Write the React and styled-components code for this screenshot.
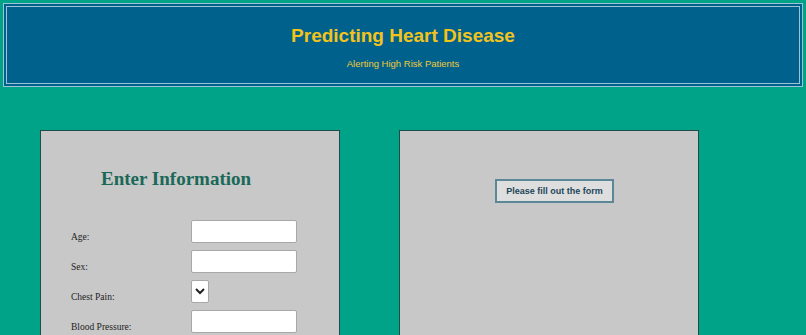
import styled, { createGlobalStyle } from "styled-components";

const GlobalStyle = createGlobalStyle`
  html, body {
    margin: 0;
    padding: 0;
    background: #00a387;
    overflow: hidden;
  }

  body {
    padding: 3px;
    font-family: "Liberation Sans", Arial, sans-serif;
  }
`;

const Header = styled.header`
  height: 76px;
  border: 4px double #9cc3d6;
  background: #00628c;
  display: flex;
  flex-direction: column;
  align-items: center;
  box-sizing: content-box;
`;

const HeaderTitle = styled.h1`
  margin: 18px 0 0;
  font-size: 19px;
  line-height: 22px;
  font-weight: 700;
  color: #f3c31c;
`;

const HeaderSubtitle = styled.p`
  margin: 11px 0 0;
  font-size: 9.5px;
  line-height: 12px;
  color: #f0c93a;
`;

const Main = styled.main`
  display: flex;
  gap: 59px;
  padding: 43px 0 0 37px;
`;

const Panel = styled.section`
  width: 298px;
  height: 260px;
  background: #c8c8c8;
  border: 1px solid #1e4d48;
  flex-shrink: 0;
`;

const FormTitle = styled.h2`
  margin: 37px 0 0 60px;
  font-family: "Liberation Serif", "Times New Roman", serif;
  font-size: 19px;
  line-height: 22px;
  font-weight: 700;
  color: #1b6858;
`;

const FormGrid = styled.form`
  display: grid;
  grid-template-columns: 120px auto;
  row-gap: 7px;
  margin: 30px 0 0 30px;
`;

const Label = styled.label`
  font-family: "Liberation Serif", "Times New Roman", serif;
  font-size: 9.5px;
  color: #222;
  align-self: end;
  padding-bottom: 1px;
`;

const TextInput = styled.input`
  width: 106px;
  height: 23px;
  box-sizing: border-box;
  border: 1px solid #a8a8a8;
  border-radius: 2px;
  background: #fff;
  margin: 0;
  padding: 0 4px;
`;

const Select = styled.select`
  width: 18px;
  height: 23px;
  box-sizing: border-box;
  border: 1px solid #a8a8a8;
  border-radius: 2px;
  background: #fff;
  color: #222;
  margin: 0;
  padding: 0;
  font-size: 9px;
`;

const StatusBox = styled.div`
  margin: 48px 0 0 95px;
  width: 119px;
  height: 24px;
  box-sizing: border-box;
  border: 2px solid #5b8797;
  background: #dedede;
  display: flex;
  align-items: center;
  justify-content: center;
  font-size: 9px;
  font-weight: 700;
  color: #1d4658;
`;

export default function App() {
  return (
    <>
      <GlobalStyle />
      <Header>
        <HeaderTitle>Predicting Heart Disease</HeaderTitle>
        <HeaderSubtitle>Alerting High Risk Patients</HeaderSubtitle>
      </Header>
      <Main>
        <Panel>
          <FormTitle>Enter Information</FormTitle>
          <FormGrid>
            <Label>Age:</Label>
            <TextInput />
            <Label>Sex:</Label>
            <TextInput />
            <Label>Chest Pain:</Label>
            <div>
              <Select>
                <option></option>
              </Select>
            </div>
            <Label>Blood Pressure:</Label>
            <TextInput />
          </FormGrid>
        </Panel>
        <Panel>
          <StatusBox>Please fill out the form</StatusBox>
        </Panel>
      </Main>
    </>
  );
}
